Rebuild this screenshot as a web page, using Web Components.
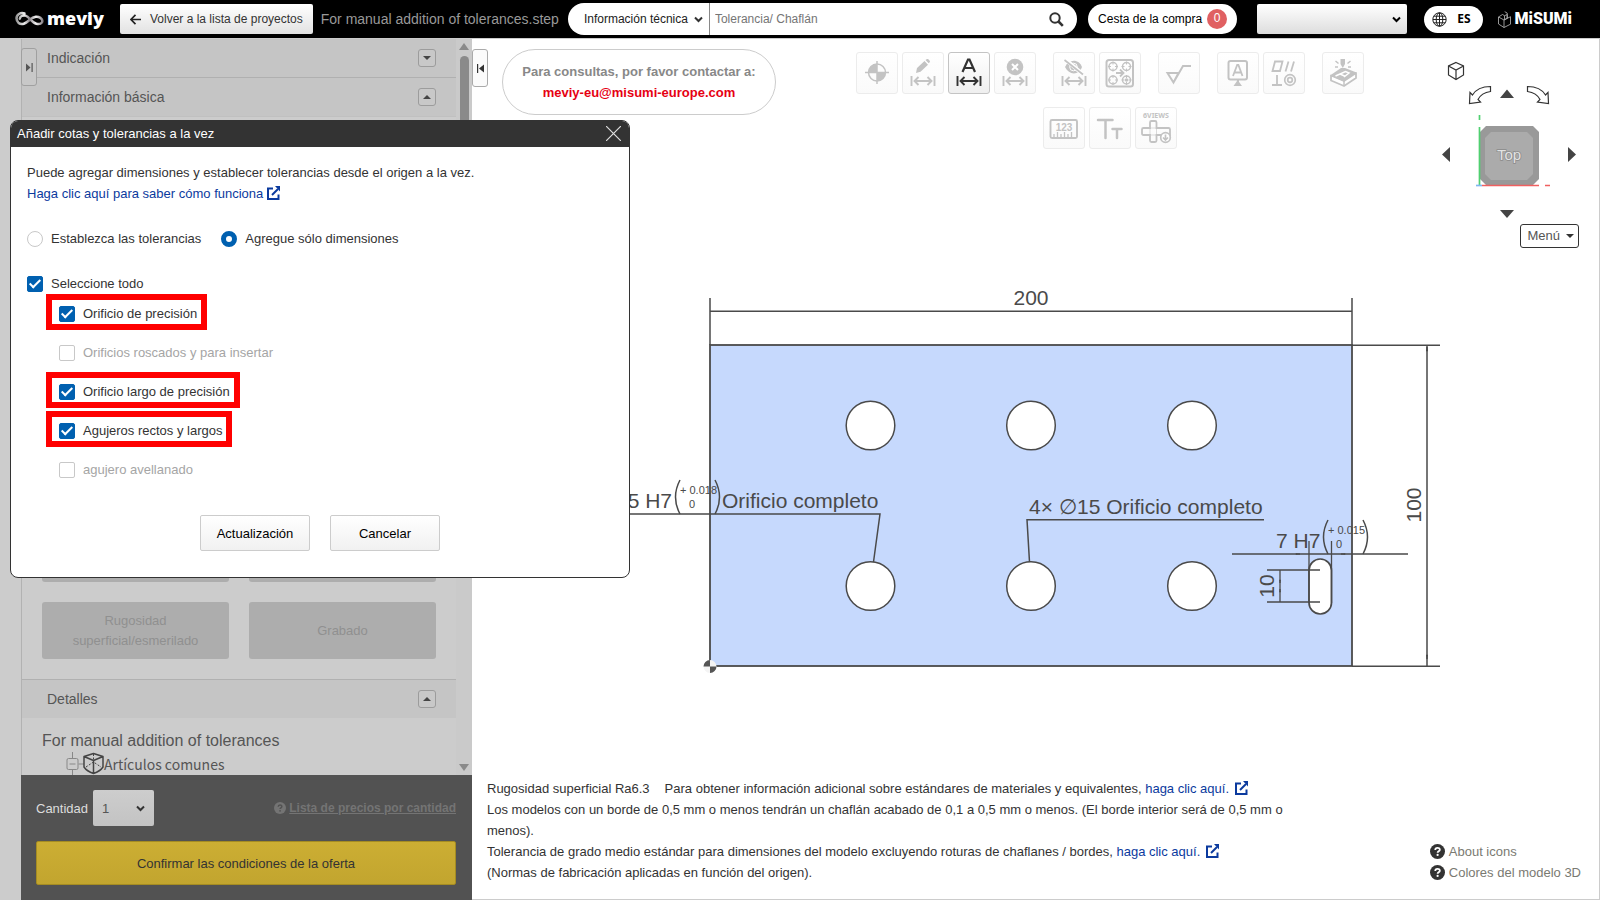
<!DOCTYPE html>
<html lang="es">
<head>
<meta charset="utf-8">
<meta name="viewport" content="width=device-width, initial-scale=1">
<title>meviy</title>
<style>
  body { margin: 0; font: 13px/21px "Liberation Sans", Arial, sans-serif; color: #333; background: #fff; }
</style>
</head>
<body>
<meviy-app></meviy-app>

<script>
const define = (name, html, setup) => customElements.define(name, class extends HTMLElement {
  connectedCallback() {
    if (this.shadowRoot) return;
    const root = this.attachShadow({ mode: 'open' });
    const tpl = document.createElement('template');
    tpl.innerHTML = `<style>*,*::after{box-sizing:border-box}:host{box-sizing:border-box}button,input,select{font:inherit;color:inherit;margin:0}</style>` +
      (typeof html === 'function' ? html(this) : html);
    root.append(tpl.content.cloneNode(true));
    if (setup) setup(this, root);
  }
});

/* ---------- small shared parts ---------- */

define('ext-icon', `
<style>:host{display:inline-block;vertical-align:-2px;width:14px;height:14px;margin-left:var(--gap,4px)}svg{display:block}</style>
<svg width="14" height="14" viewBox="0 0 14 14" fill="none" stroke="currentColor" stroke-width="2">
  <path d="M6 2.500H1V13h10.500V8.500"/><path d="M5 9 11 3"/><path d="M8 0h5v5.500z" fill="currentColor" stroke="none"/></svg>`);

define('help-icon', `
<style>:host{display:inline-block;width:var(--size,15px);height:var(--size,15px)}svg{display:block;width:100%;height:100%}</style>
<svg viewBox="0 0 16 16"><circle cx="8" cy="8" r="8" fill="currentColor"/>
  <path d="M5.600 6.300c0-3 4.900-3 4.900-.2 0 1.600-2.400 1.700-2.400 3.200" fill="none" stroke="var(--mark,#fff)" stroke-width="1.900"/>
  <circle cx="8.100" cy="11.700" r="1.200" fill="var(--mark,#fff)"/></svg>`);

define('drop-down', el => `
<style>
  :host{display:block;position:relative}
  select{appearance:none;display:block;width:100%;height:100%;border:0;border-radius:2px;
    background:var(--face,transparent);padding:0 18px 0 var(--pad,16px);outline:0}
  svg{position:absolute;right:var(--arrow,6px);top:50%;margin-top:-3px;pointer-events:none}
</style>
<select aria-label="${el.getAttribute('label')}"><option>${el.getAttribute('value') || ''}</option></select>
<svg width="9" height="7" viewBox="0 0 9 7" fill="none" stroke="var(--tick,#000)" stroke-width="2"><path d="m1 1.500 3.500 3.500L8 1.500"/></svg>`);

define('fold-button', el => `
<style>
  :host{display:block}
  button{display:grid;place-items:center;width:18px;height:18px;padding:0;border:1px solid #9c9c9c;border-radius:3px;background:#c8c8c8}
  svg{display:block}
</style>
<button aria-label="${el.hasAttribute('open') ? 'Cerrar' : 'Abrir'}"><svg width="8" height="4" viewBox="0 0 8 4" fill="#444">
${el.hasAttribute('open') ? '<path d="M0 4h8L4 0z"/>' : '<path d="M0 0h8L4 4z"/>'}</svg></button>`);

define('side-tab', el => `
<style>
  :host{display:block}
  button{display:grid;place-items:center;width:16px;height:38px;padding:0;border:1px solid var(--edge,#aaa);border-radius:3px;
    background:var(--face,#fbfbfb)}
  svg{display:block}
</style>
<button aria-label="Panel"><svg width="7" height="9" viewBox="0 0 7 9" fill="var(--glyph,#333)">
${el.hasAttribute('flip') ? '<path d="M0 .5v8l4.500-4zM5.500 0h1.200v9H5.500z"/>' : '<path d="M7 .5v8l-5-4zM0 0h1.200v9H0z"/>'}</svg></button>`);

/* ---------- header ---------- */

define('brand-logo', `
<style>
  :host{display:flex;align-items:center;width:90px;color:#fff;font:800 18px/24px "Open Sans",sans-serif}
  svg{flex:none;margin-right:3px}
  span{padding-bottom:2px}
</style>
<svg width="29" height="16" viewBox="0 0 29 16" fill="none">
  <defs><linearGradient id="g"><stop stop-color="#999"/><stop offset=".3" stop-color="#eee"/><stop offset=".5" stop-color="#8d878c"/><stop offset=".75" stop-color="#f4f4f4"/><stop offset="1" stop-color="#8d878c"/></linearGradient></defs>
  <path d="M9.500 2.500C5.500 1 1.500 3.600 1.500 7.300c0 4 3.100 6.500 7.300 5.400 4.900-1.300 6.700-6.500 12-7 3.600-.3 6.600 2 6.600 4.300 0 2.700-2.800 3.500-6.100 2.800-4.700-1-6.900-7.300-10.800-8.200-3.200-.7-5.400.8-5.700 3.100" stroke="url(#g)" stroke-width="2.500" stroke-linecap="round"/>
</svg><span>meviy</span>`);

define('misumi-logo', `
<style>
  :host{display:flex;align-items:center;gap:4px;color:#fff;font:900 16px/20px Roboto,"Open Sans",sans-serif}
  svg{flex:none}
</style>
<svg width="13" height="17" viewBox="0 0 13 17" fill="none" stroke="#bbb" stroke-width=".8">
  <path d="M.5 6 6 9v7.500L.5 13zM.5 6l4-2.500 2 1.200M6 9l6.500-3.300v7.500L6 16.500M6.500 4.700v4l2.700-1.400V2L6.700.7M6.500 4.700 9.200 3.500v3.800"/></svg>
<span>MiSUMi</span>`);

define('app-header', `
<style>
  :host{display:flex;align-items:center;height:39px;padding:0 28px 0 15px;background:#000;font-size:12px;line-height:16px;border-bottom:1px solid #ccc}
  .back{display:flex;align-items:center;height:30px;margin-left:15px;padding:0 10px;gap:9px;border:0;border-radius:2px;
    background:linear-gradient(#fff,#e2e2e2);color:#333;white-space:nowrap}
  .file{margin-left:8px;font-size:14px;color:#999;white-space:nowrap}
  .search{display:flex;align-items:center;flex:1;min-width:300px;height:32px;margin-left:9px;border-radius:16px;background:#fff;overflow:hidden}
  .search drop-down{flex:none;width:142px;height:32px;border-right:1px solid #888;color:#222;--tick:#333}
  .search input{flex:1;min-width:0;height:32px;border:0;outline:0;background:none;padding:0 5px;color:#222}
  .search input::placeholder{color:#757575;opacity:1}
  .search button{border:0;background:none;padding:0 13px;display:flex}
  .cart{display:flex;align-items:center;gap:5px;height:30px;margin-left:11px;padding:0 10px;border:0;border-radius:15px;background:#fff;color:#000;white-space:nowrap}
  .cart b{width:20px;height:20px;border-radius:10px;background:#e06062;color:#fff;font-weight:400;line-height:19px;text-align:center}
  .user{flex:none;width:150px;height:30px;margin:0 17px 0 20px;--face:linear-gradient(#fff,#ddd)}
  .lang{display:flex;align-items:center;gap:10px;height:27px;padding:0 12px 0 8px;border:0;border-radius:14px;background:#fff;color:#000;
    font:700 12px/16px "Noto Sans",sans-serif}
  misumi-logo{margin-left:15px}
</style>
<brand-logo></brand-logo>
<button class="back"><svg width="11" height="11" viewBox="0 0 11 11" fill="none" stroke="#222" stroke-width="1.700"><path d="M5.500.8.9 5.500l4.600 4.700M1 5.500h10"/></svg>Volver a la lista de proyectos</button>
<span class="file">For manual addition of tolerances.step</span>
<div class="search">
  <drop-down label="Ámbito" value="Información técnica"></drop-down>
  <input type="text" aria-label="Buscar" placeholder="Tolerancia/ Chaflán">
  <button aria-label="Buscar"><svg width="15" height="15" viewBox="0 0 15 15" fill="none" stroke="#333"><circle cx="6" cy="6" r="4.700" stroke-width="2"/><path d="m9.500 9.500 4.300 4.300" stroke-width="2.600"/></svg></button>
</div>
<button class="cart">Cesta de la compra <b>0</b></button>
<drop-down class="user" label="Usuario"></drop-down>
<button class="lang"><svg width="15" height="15" viewBox="0 0 15 15" fill="none" stroke="#222"><circle cx="7.500" cy="7.500" r="6.700"/><ellipse cx="7.500" cy="7.500" rx="3.300" ry="6.700"/><path d="M7.500 1v13M1 7.500h13M2 4.200h11M2 10.800h11"/></svg>ES</button>
<misumi-logo></misumi-logo>`);

/* ---------- left panel ---------- */

define('panel-head', el => `
<style>
  :host{display:flex;align-items:center;justify-content:space-between;height:39px;flex:none;padding:0 20px 0 25px;
    background:#c5c5c5;border-bottom:1px solid #b0b0b0;font-size:14px;line-height:20px;color:#555}
</style>
<slot></slot><fold-button ${el.hasAttribute('open') ? 'open' : ''}></fold-button>`);

define('option-panel', `
<style>
  :host{display:flex;flex:0 0 472px;background:#ccc;position:relative}
  .main{display:flex;flex-direction:column;flex:1;margin-left:21px;border-left:1px solid #b2b2b2;min-width:0}
  .scroll{display:flex;flex:1;min-height:0}
  .list{display:flex;flex-direction:column;flex:1;min-width:0;min-height:0}
  .cards{display:grid;grid-template-columns:1fr 1fr;grid-auto-rows:57px;gap:20px;align-content:end;flex:1;min-height:0;overflow:hidden;padding:0 20px 20px}
  .cards button,.cards i{border:0;border-radius:3px;background:#adadad;color:#909090;line-height:20px;padding:0 26px}
  panel-head.second{border-bottom-color:#c0c0c0}
  panel-head.details{border-top:1px solid #b0b0b0;border-bottom:0}
  .tree{height:57px;overflow:hidden;flex:none;padding:13px 20px 0;color:#555}
  h2{margin:0;font:400 16px/20px "Liberation Sans",sans-serif}
  .node{display:flex;align-items:center;padding-left:24px;height:26px;font:14px/20px "Noto Sans CJK JP","Noto Sans",sans-serif}
  .bar{flex:0 0 16px;display:flex;flex-direction:column;align-items:center;background:#cacaca;padding:4px 0}
  .bar .thumb{width:9px;height:420px;margin:6px 0 auto;border-radius:5px;background:#8a8a8a}
  .foot{background:#525252;margin-left:-1px;padding:15px 16px 15px 15px;position:relative;color:#ddd;flex:none}
  .row{display:flex;align-items:center;margin-bottom:15px}
  .row drop-down{width:61px;height:36px;margin-left:5px;color:#555;--face:linear-gradient(#cdcdcd,#c3c3c3);--pad:9px;--arrow:9px;--tick:#333}
  .row a{display:flex;align-items:center;gap:3px;margin-left:auto;color:#747474;font:700 12px/16px "Liberation Sans",sans-serif;--size:12px;--mark:#525252}
  .go{display:block;width:100%;height:44px;border:1px solid #a58c22;border-radius:2px;background:linear-gradient(#ccae33,#c2a52f);color:#333}
  side-tab{position:absolute;left:21px;top:9px;--face:#c8c8c8;--edge:#a0a0a0;--glyph:#555}
</style>
<div class="main">
  <div class="scroll">
    <div class="list">
      <panel-head>Indicación</panel-head>
      <panel-head class="second" open>Información básica</panel-head>
      <div class="cards"><i></i><i></i>
        <button disabled>Rugosidad superficial/esmerilado</button><button disabled>Grabado</button></div>
      <panel-head class="details" open>Detalles</panel-head>
      <div class="tree"><h2>For manual addition of tolerances</h2>
        <div class="node"><svg width="38" height="26" viewBox="0 0 38 26" fill="none" stroke="#888">
          <path d="M6.500 1v6M6.500 19v7M12.500 13H18M3.500 13h6"/><rect x="1" y="7.500" width="11" height="11" rx="1.500"/>
          <g stroke="#444" stroke-width="1.500" stroke-linejoin="round"><path d="M18 5.500 27.500 2.500 37 5.500V16c-2 3-5 5-9.500 6.500C23 21 20 19 18 16zM18 5.500l9.500 4 9.500-4M27.500 9.500v13"/><path d="M20 16l7.500-5 7.500 5M27.500 3v7" stroke-dasharray="2 1.500" stroke-width="1"/></g></svg>Artículos comunes</div></div>
    </div>
    <div class="bar"><svg width="10" height="7" viewBox="0 0 10 7" fill="#8a8a8a"><path d="M0 7h10L5 0z"/></svg><div class="thumb"></div>
      <svg width="10" height="7" viewBox="0 0 10 7" fill="#8a8a8a"><path d="M0 0h10L5 7z"/></svg></div>
  </div>
  <div class="foot">
    <div class="row"><span>Cantidad</span><drop-down label="Cantidad" value="1"></drop-down>
      <a href="#"><help-icon></help-icon>Lista de precios por cantidad</a></div>
    <button class="go">Confirmar las condiciones de la oferta</button>
  </div>
</div>
<side-tab flip></side-tab>`);

/* ---------- toolbar ---------- */

const DIM = `<path d="M9.500 24v10M32.500 24v10M12 29h18M16.500 25 12.500 29l4 4M25.500 25l4 4-4 4" stroke-width="1.900"/>`;
const TARGET = (x, y) => `<circle cx="${x}" cy="${y}" r="4" stroke-width="1.500"/><path d="M${x - 5} ${y}h3M${x + 2} ${y}h3M${x} ${y - 5}v3M${x} ${y + 2}v3" stroke-width="1"/>`;
const ICONS = {
  origin: `<circle cx="21" cy="20.500" r="8.500" stroke-width="1.500"/><path d="M21 20.500V12a8.500 8.500 0 0 0-8.500 8.500zM21 20.500V29a8.500 8.500 0 0 0 8.500-8.500z" fill="currentColor" stroke="none"/><path d="M21 9v23M9 20.500h24" stroke-width="1.500"/>`,
  edit: `<path d="m14 21 1-5 7.500-7 3.500 3.800-7.500 7zM23.500 8l1.500-1c1-.6 3.600 1.900 2.900 3l-1.200 1.300z" fill="currentColor" stroke="none"/>${DIM}`,
  auto: `<path d="M14.500 20 20 7.500h1.500L27 20M16.500 16h8.500" stroke-width="2.200"/>${DIM}`,
  remove: `<circle cx="21" cy="15" r="8.300" fill="currentColor" stroke="none"/><path d="m18 12 6 6m0-6-6 6" stroke="#fff" stroke-width="2"/>${DIM}`,
  hide: `<path d="M12 15c4-8.500 14-8.500 17 0-3 8.500-13 8.500-17 0z" fill="currentColor" stroke="none"/><circle cx="20.500" cy="15" r="3.800" stroke="#fff"/><path d="m12.500 7.500 17 14.500" stroke="#fff" stroke-width="4"/><path d="m11.500 8 18.500 14.500" stroke-width="1.700"/>${DIM}`,
  group: `<rect x="7.500" y="8" width="26.500" height="26.500" rx="2.500" stroke-width="2"/>${TARGET(14, 14.5)}${TARGET(27.5, 14.5)}${TARGET(14, 28)}${TARGET(27.5, 28)}<circle cx="27.500" cy="28" r="1.700" fill="currentColor" stroke="none"/><path d="M17 21h7M21 17.500l3.500 3.500-3.500 3.500" stroke-width="1.800"/>`,
  rough: `<path d="M9.500 21h11l-5 9.500zM15.500 30.500 25 14h8" stroke-width="2"/>`,
  datum: `<rect x="11.500" y="9" width="18.500" height="18.500" rx="2" stroke-width="2"/><path d="m16 24 4.200-11h1.200L25.500 24M17 20.500h7.500" stroke-width="1.800"/><path d="M21 28v4" stroke-width="2"/><path d="M16.500 34h8.500L20.700 28z" fill="currentColor" stroke="none"/>`,
  geo: `<path d="M12 9.500h7.500L17 19H9.500zM22.500 19.500l3-10M28 19.500l3-10M9 33h10M14 23v10" stroke-width="1.800"/><circle cx="27" cy="28" r="5.300" stroke-width="1.700"/><circle cx="27" cy="28" r="2.300" stroke-width="1.700"/>`,
  engrave: `<path d="M9 23.500v5L22 34l12-8v-5L22 29z" fill="#fff" stroke-width="1.800" stroke-linejoin="round"/><path d="M8 23.500 19 16h4l11.500 4.500L22 29.500z" fill="currentColor" stroke="none"/><path d="M22 29v5" stroke-width="1.500"/><path d="m13.500 24 10-4.500 3.500 1.500-5 4M18 22l4.500 2" stroke="#fff" stroke-width="1.500"/><path d="M18.500 7h4.500v5l-2.200 4-2.300-4z" fill="currentColor" stroke="none"/><path d="m13.500 9 3 2.500M28.500 9l-3 2.500M13 15h3M26 15h3" stroke-width="1.500"/>`,
  ruler: `<rect x="7.500" y="13" width="26.500" height="18" rx="1.500" stroke-width="1.900"/><path d="M11 30v-3M14.500 30v-5M18 30v-3M21.500 30v-5M25 30v-3M28.500 30v-5" stroke-width="1.300"/><text x="21" y="24" text-anchor="middle" font-size="10" font-weight="700" fill="currentColor" stroke="none" font-family="Liberation Sans">123</text>`,
  text: `<path d="M9 13h14.500M16.500 13v18" stroke-width="2.500" stroke-linecap="round"/><path d="M23.500 22h9M28 22v9" stroke-width="2.500" stroke-linecap="round"/>`,
  views: `<text x="21" y="11" text-anchor="middle" font-size="7" font-weight="700" fill="currentColor" stroke="none" font-family="Noto Sans">6VIEWS</text><path d="M15 21v-5.500c0-1 .5-1.500 1.500-1.500H20c1 0 1.500.5 1.500 1.500V21H33.500c1 0 1.500.5 1.500 1.500V28H21.500v5.500c0 1-.5 1.500-1.500 1.500h-3.500c-1 0-1.500-.5-1.500-1.500V28H8.500c-1 0-1.500-.5-1.500-1.500v-4c0-1 .5-1.500 1.500-1.500z" stroke-width="1.800"/><path d="M15 21v7h6.500v-7z" stroke-width=".6"/><circle cx="30.500" cy="30.500" r="4.800" fill="#fff" stroke-width="1.700"/><path d="M30.500 27.500v5M28 30.500l2.500 2.500 2.500-2.500" stroke-width="1.700"/>`
};

define('tool-button', el => `
<style>
  :host{display:block}
  button{display:block;width:42px;height:42px;padding:0;border:1px solid #ececec;border-radius:3px;background:linear-gradient(#fff,#fafafa);color:#c3c3c3}
  :host([active]) button{border-color:#c4c4c4;background:linear-gradient(#fff,#efefef);color:#333}
  svg{display:block;margin:-1px}
</style>
<button aria-label="${el.getAttribute('icon')}"><svg width="42" height="42" viewBox="0 0 42 42" fill="none" stroke="currentColor">${ICONS[el.getAttribute('icon')]}</svg></button>`);

define('tool-bar', `
<style>
  :host{display:flex;flex-direction:column;align-items:center;gap:13px}
  div{display:flex;gap:17px}
  span{display:flex;gap:4px}
</style>
<div>
  <span><tool-button icon="origin"></tool-button><tool-button icon="edit"></tool-button><tool-button icon="auto" active></tool-button><tool-button icon="remove"></tool-button></span>
  <span><tool-button icon="hide"></tool-button><tool-button icon="group"></tool-button></span>
  <span><tool-button icon="rough"></tool-button></span>
  <span><tool-button icon="datum"></tool-button><tool-button icon="geo"></tool-button></span>
  <span><tool-button icon="engrave"></tool-button></span>
</div>
<div><span><tool-button icon="ruler"></tool-button><tool-button icon="text"></tool-button><tool-button icon="views"></tool-button></span></div>`);

/* ---------- orientation cube ---------- */

define('view-cube', `
<style>
  :host{display:flex;flex-direction:column;align-items:flex-end;gap:6px}
  svg{display:block}
  button{display:flex;align-items:center;gap:6px;height:24px;padding:0 4px 0 6px;border:1px solid #333;border-radius:3px;background:#fff;color:#555;line-height:16px}
</style>
<svg width="140" height="160" viewBox="1439 58 140 160" fill="none" stroke="#333" stroke-width="1.200">
  <path d="m1456 62.500 7.500 3.500v9l-7.500 4.500-7.500-4.500v-9zM1448.500 66l7.500 4 7.500-4M1456 70v9.500"/>
  <path d="M1490.500 86.500v5c-7 1-10.500 4-12.500 8l2.500 2.500-11 1.500.5-11 2.500 2.500c3-5 9-8.500 18-8.500zM1527.500 86.500v5c7 1 10.500 4 12.500 8l-2.500 2.500 11 1.500-.5-11-2.500 2.500c-3-5-9-8.500-18-8.500z"/>
  <g fill="#444" stroke="none"><path d="M1500 98h14l-7-8.500zM1500 210h14l-7 8zM1450 147v15l-8-7.500zM1568 147v15l8-7.500z"/></g>
  <g stroke="none"><path d="M1486 126h47l6 6v47l-6 6h-47l-6-6v-47z" fill="#999"/>
  <path d="M1491 132h36l6 6v36l-6 6h-36l-6-6v-36z" fill="#ababab"/></g>
  <path d="M1479.500 127v58M1479.500 115v5" stroke="#4fd070" stroke-width="1.700"/>
  <path d="M1482 185.500h57M1545 185.500h5" stroke="#f06060" stroke-width="1.700"/><path d="M1476 185.500h6" stroke="#80b8f0" stroke-width="1.700"/>
  <text x="1509" y="160" text-anchor="middle" font-size="15" font-family="Liberation Sans" fill="#e2e2e2" stroke="#8a8a8a" stroke-width="1.500" paint-order="stroke">Top</text>
</svg>
<button>Menú <svg width="8" height="4" viewBox="0 0 8 4" fill="#333"><path d="M0 0h8L4 4z"/></svg></button>`);

/* ---------- drawing ---------- */

const hole = (x, y) => `<circle cx="${x}" cy="${y}" r="24.300" fill="#fff"/>`;
define('part-drawing', `
<style>
  :host{display:block;position:absolute;inset:0}
  svg{display:block;width:100%;height:100%}
  text{fill:#4a4a4a;stroke:none;font:21px "Liberation Sans",sans-serif}
  .s{font-size:11px}
  .e{font:200 21px "DejaVu Sans Light","DejaVu Sans",sans-serif}
</style>
<svg viewBox="472 39 1127 860" fill="none" stroke="#4a4a4a" stroke-width="1.500">
  <rect x="710" y="345" width="642" height="321" fill="#c6d9fd" stroke-width="1.800"/>
  ${hole(870.5, 425.5)}${hole(1031, 425.5)}${hole(1192, 425.5)}${hole(870.5, 586)}${hole(1031, 586)}${hole(1192, 586)}
  <rect x="1309" y="559" width="22.500" height="55" rx="11.200" fill="#fff" stroke-width="1.700"/>
  <path d="M710 298v47M1352 298v47M710 311.300h642M1352 345.300h88M1352 666.300h88M1427 345v321"/>
  <path d="M1426.500 351h1l-.5-4zM1426.500 655h1l-.5 4z" stroke-width="1"/>
  <path d="M472 514h408l-6.500 48M1264 519.700h-237l2.500 42.300" />
  <path d="M1232 554h176M1309 541v62M1331.500 541v62M1267 570h53M1267 602h53M1280 570v32" stroke-width="1.300"/>
  <path d="M1296 553.500v1l4-.5zM1345 553.500v1l-4-.5zM1279.500 580l.5 3 .5-3zM1279.500 592l.5-3 .5 3z" stroke-width=".8"/>
  <path d="M680 480q-9 17 0 34M715 480q9 17 0 34M1328 520q-9 17 0 34M1363 520q9 17 0 34"/>
  <g stroke="none"><circle cx="710" cy="666.500" r="6.500" fill="#f4f4f4"/><path d="M710 666.500V660a6.500 6.500 0 0 0-6.500 6.500zM710 666.500v6.500a6.500 6.500 0 0 0 6.500-6.500z" fill="#555"/></g>
  <text x="1031" y="305" text-anchor="middle">200</text>
  <text transform="translate(1421 505) rotate(-90)" text-anchor="middle">100</text>
  <text transform="translate(1274 586) rotate(-90)" text-anchor="middle">10</text>
  <text x="672" y="508" text-anchor="end">5 H7</text>
  <text x="680" y="494" class="s">+ 0.018</text><text x="689" y="508" class="s">0</text>
  <text x="722" y="508">Orificio completo</text>
  <text x="1029" y="514">4×</text><text x="1059" y="514" class="e">∅</text><text x="1077" y="514">15 Orificio completo</text>
  <text x="1276" y="548">7 H7</text>
  <text x="1328" y="534" class="s">+ 0.015</text><text x="1336" y="548" class="s">0</text>
</svg>`);

define('model-viewer', `
<style>
  :host{display:flex;flex-direction:column;justify-content:space-between;flex:1;min-width:0;position:relative;background:#fff;
    border-right:1px solid #ccc;border-bottom:1px solid #ccc}
  .top{display:grid;grid-template-columns:304px 1fr 155px;position:relative}
  .contact{position:relative;margin:10px 0 0 30px;width:274px;height:66px;padding:11px 0;border:1px solid #ccc;border-radius:33px;
    font-weight:700;text-align:center;color:#888;line-height:21px;white-space:nowrap}
  .contact a{display:block;color:#e60012;text-decoration:none}
  tool-bar{margin-top:13px}
  view-cube{margin:19px 20px 0 0}
  side-tab{position:absolute;left:0;top:10px}
  .bottom{display:flex;align-items:flex-end;justify-content:space-between;position:relative;padding:0 18px 16px 15px}
  p{margin:0;max-width:815px;--gap:6px}
  .bottom p a{color:#0b3a9e;text-decoration:none}
  .gap{padding-right:15px}
  nav{display:flex;flex-direction:column}
  nav a{display:flex;align-items:center;gap:4px;color:#7a7a72;text-decoration:none;white-space:nowrap}
  nav help-icon{color:#333}
</style>
<part-drawing></part-drawing>
<div class="top">
  <div class="contact">Para consultas, por favor contactar a:<a href="mailto:meviy-eu@misumi-europe.com">meviy-eu@misumi-europe.com</a></div>
  <tool-bar></tool-bar>
  <view-cube></view-cube>
  <side-tab></side-tab>
</div>
<div class="bottom">
  <p><span class="gap">Rugosidad superficial Ra6.3</span>Para obtener información adicional sobre estándares de materiales y equivalentes, <a href="#">haga clic aquí.<ext-icon></ext-icon></a><br>
  Los modelos con un borde de 0,5 mm o menos tendrán un chaflán acabado de 0,1 a 0,5 mm o menos. (El borde interior será de 0,5 mm o menos).<br>
  Tolerancia de grado medio estándar para dimensiones del modelo excluyendo roturas de chaflanes / bordes, <a href="#">haga clic aquí.<ext-icon></ext-icon></a><br>
  (Normas de fabricación aplicadas en función del origen).</p>
  <nav><a href="#"><help-icon></help-icon>About icons</a><a href="#"><help-icon></help-icon>Colores del modelo 3D</a></nav>
</div>`);

/* ---------- dialog ---------- */

define('choice-box', el => `
<style>
  :host{display:block}
  label{position:relative;display:flex;width:fit-content;align-items:center;gap:8px;height:var(--row,21px);white-space:nowrap}
  :host([disabled]) label{color:#a5a5a5}
  input{appearance:none;position:relative;width:16px;height:16px;border:1px solid #c8c8c8;border-radius:2px;background:#fff}
  input:checked{background:#0060b0;border-color:#0060b0}
  input[type=checkbox]:checked::after{content:"";position:absolute;left:4px;top:0;width:6px;height:11px;border:solid #fff;border-width:0 2px 2px 0;transform:rotate(45deg)}
  input[type=radio]{border-radius:8px}
  input[type=radio]:checked{background:#fff;border:5px solid #0060b0}
  :host([marked]) label::after{content:"";position:absolute;inset:0 -10px auto -13px;height:36px;border:6px solid #f00}
</style>
<label><input type="${el.getAttribute('type') || 'checkbox'}" name="c" ${el.hasAttribute('checked') ? 'checked' : ''} ${el.hasAttribute('disabled') ? 'disabled' : ''}><slot></slot></label>`);

define('tolerance-dialog', `
<style>
  :host{display:block;position:absolute;left:10px;top:120px;width:620px;border:1px solid #333;border-radius:8px;background:#fff;overflow:hidden}
  header{display:flex;align-items:center;justify-content:space-between;height:26px;padding:0 8px 2px 6px;background:#333;color:#fff}
  header button{display:flex;padding:0;border:0;background:none}
  .body{padding:15px 16px 26px}
  p{margin:0}
  a{color:#0b3a9e;text-decoration:none}
  .modes{display:flex;gap:20px;margin:24px 0}
  .items{padding-left:32px;--row:39px}
  .actions{display:flex;justify-content:center;gap:20px;margin-top:26px}
  .actions button{width:110px;height:36px;padding:0;border:1px solid #ccc;border-radius:2px;background:linear-gradient(#fff,#f1f1f1);color:#000}
</style>
<header><span>Añadir cotas y tolerancias a la vez</span>
  <button aria-label="Cerrar"><svg width="15" height="15" viewBox="0 0 15 15" stroke="#ddd" stroke-width="1.200"><path d="m0 0 15 15M15 0 0 15"/></svg></button></header>
<div class="body">
  <p>Puede agregar dimensiones y establecer tolerancias desde el origen a la vez.</p>
  <p><a href="#">Haga clic aquí para saber cómo funciona<ext-icon></ext-icon></a></p>
  <div class="modes"><choice-box type="radio">Establezca las tolerancias</choice-box><choice-box type="radio" checked>Agregue sólo dimensiones</choice-box></div>
  <choice-box checked>Seleccione todo</choice-box>
  <div class="items">
    <choice-box checked marked>Orificio de precisión</choice-box>
    <choice-box disabled>Orificios roscados y para insertar</choice-box>
    <choice-box checked marked>Orificio largo de precisión</choice-box>
    <choice-box checked marked>Agujeros rectos y largos</choice-box>
    <choice-box disabled>agujero avellanado</choice-box>
  </div>
  <div class="actions"><button>Actualización</button><button>Cancelar</button></div>
</div>`);

define('meviy-app', `
<style>
  :host{display:flex;flex-direction:column;min-height:100vh;position:relative}
  main{display:flex;flex:1;min-height:0}
</style>
<app-header></app-header>
<main><option-panel></option-panel><model-viewer></model-viewer></main>
<tolerance-dialog></tolerance-dialog>`);
</script>
</body>
</html>
